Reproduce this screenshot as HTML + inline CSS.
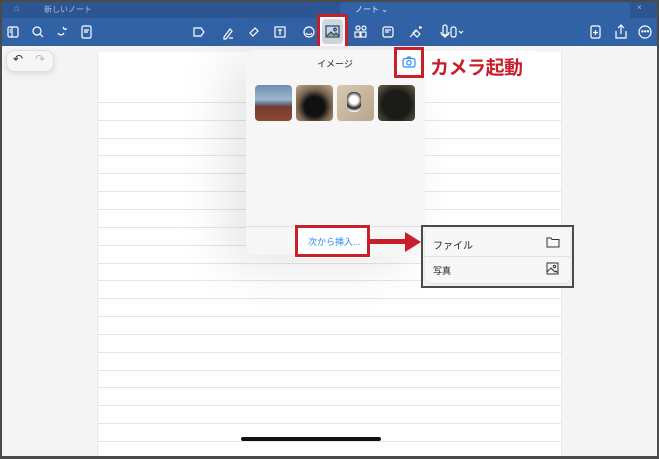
<!DOCTYPE html>
<html><head><meta charset="utf-8"><style>
*{margin:0;padding:0;box-sizing:border-box}
body{width:659px;height:459px;overflow:hidden;background:#f4f4f4;font-family:"Liberation Sans","Noto Sans CJK JP",sans-serif;position:relative}
.a{position:absolute}
.frame{left:0;top:0;width:659px;height:459px;border:2px solid #4a4a4a;border-bottom-width:3px;z-index:50;pointer-events:none}
.title{left:0;top:0;width:659px;height:18px;background:#2c5592}
.tool{left:0;top:18px;width:659px;height:28px;background:#3262a6}
.paper{left:97px;top:46px;width:465px;height:413px;background:#fff;border-left:1px solid #e8e8e8;border-right:1px solid #e8e8e8}
.line{position:absolute;left:0;width:100%;height:1px;background:#e6e6e6}
svg{position:absolute}
</style></head><body>
<div class="a title"></div>
<div class="a" style="left:14px;top:3px;color:#8fa6c8;font-size:9px">⌂</div>
<div class="a" style="left:44px;top:4px;color:#aebfd8;font-size:8px">新しいノート</div>
<div class="a" style="left:340px;top:2px;height:16px;background:#3262a6;border-radius:4px 4px 0 0;width:290px"></div>
<div class="a" style="left:355px;top:4px;color:#dfe7f2;font-size:8px">ノート ⌄</div>
<div class="a" style="left:637px;top:3px;color:#aebfd8;font-size:8px">×</div>
<div class="a tool"></div>
<svg width="659" height="46" style="left:0;top:0" fill="none" stroke="#fff" stroke-width="1.2">
<rect x="8" y="27" width="10" height="10" rx="1.5"/><path d="M12 27v10M9.5 30h1.5M9.5 32h1.5"/>
<circle cx="37" cy="31" r="4"/><path d="M40 34l3 3"/>
<path d="M58 33c1 2 4 3 6 0M63 27l1 2l2 0l-1 1"/>
<rect x="82" y="26" width="9" height="12" rx="1.5"/><path d="M84 30h5M84 32h4"/>
<path d="M194 28h7l3 4l-3 4h-7z"/>
<path d="M224 37l6-8l2 2l-6 8h-2zM229 38h4"/>
<path d="M250 33l5-5l3 3l-5 5z"/>
<rect x="275" y="27" width="10" height="10"/><path d="M278 30h4M280 30v5"/>
<circle cx="309" cy="32" r="5"/><path d="M306 33c1 2 5 2 6 0"/>
<circle cx="358" cy="28" r="2"/><circle cx="364" cy="28" r="2"/><rect x="355" y="32" width="5" height="5"/><rect x="361" y="32" width="5" height="5"/>
<rect x="383" y="27" width="10" height="10" rx="2"/><path d="M385 30h6M385 32h4"/>
<path d="M410 37l7-7M413 33l4 4l3-3l-4-4zM420 26v3M419 27.5h3"/>
<path d="M443 27v6a2 2 0 0 0 4 0v-6a2 2 0 0 0-4 0zM441 32a4 4 0 0 0 8 0M445 36v2"/>
<rect x="451" y="27" width="5" height="10" rx="2"/><path d="M459 31l2 2l2-2"/>
<rect x="591" y="26" width="9" height="12" rx="1.5"/><path d="M595.5 30v5M593 32.5h5"/>
<path d="M616 31v7h10v-7M621 34v-9M618 28l3-3l3 3"/>
<circle cx="645" cy="32" r="6"/>
</svg>
<div class="a" style="left:641px;top:27px;color:#fff;font-size:8px;font-weight:bold">•••</div>
<div class="a" style="left:317px;top:14px;width:31px;height:37px;border:3px solid #c8202a;background:#fff;border-radius:2px"></div>
<div class="a" style="left:322px;top:19px;width:21px;height:25px;background:#d3d8e0;border-radius:4px"></div>
<svg width="20" height="20" style="left:323px;top:22px" fill="none" stroke="#2c4f80" stroke-width="1.3"><rect x="3" y="4" width="13" height="11"/><path d="M4 14l4-4l3 3l2-2l3 3" fill="#a6b24a"/><circle cx="12" cy="7.5" r="1.3"/></svg>

<div class="a paper">
<div class="line" style="top:56px"></div><div class="line" style="top:74px"></div><div class="line" style="top:92px"></div><div class="line" style="top:109px"></div><div class="line" style="top:127px"></div><div class="line" style="top:145px"></div><div class="line" style="top:163px"></div><div class="line" style="top:181px"></div><div class="line" style="top:199px"></div><div class="line" style="top:217px"></div><div class="line" style="top:234px"></div><div class="line" style="top:252px"></div><div class="line" style="top:270px"></div><div class="line" style="top:288px"></div><div class="line" style="top:306px"></div><div class="line" style="top:324px"></div><div class="line" style="top:341px"></div><div class="line" style="top:359px"></div><div class="line" style="top:377px"></div><div class="line" style="top:395px"></div>
</div>
<div class="a" style="left:97px;top:46px;width:465px;height:6px;background:#f4f4f4"></div>

<div class="a" style="left:6px;top:50px;width:48px;height:22px;background:#f6f6f6;border:1px solid #dedede;border-radius:8px;box-shadow:0 2px 6px rgba(0,0,0,.1)"></div>
<div class="a" style="left:13px;top:52px;font-size:12px;color:#333">↶</div>
<div class="a" style="left:35px;top:52px;font-size:12px;color:#bbb">↷</div>

<div class="a" style="left:246px;top:50px;width:179px;height:205px;background:#f6f6f6;border-radius:8px;box-shadow:-20px 10px 50px rgba(0,0,0,.10)"></div>
<div class="a" style="left:317px;top:57px;font-size:9px;color:#222">イメージ</div>
<div class="a" style="left:255px;top:85px;width:37px;height:36px;border-radius:4px;background:linear-gradient(180deg,#6f8fb0 0%,#9db6cf 40%,#5b6470 55%,#7a3a2c 60%,#8b4a35 100%)"></div>
<div class="a" style="left:296px;top:85px;width:37px;height:36px;border-radius:4px;background:radial-gradient(circle at 50% 60%,#111 35%,#7a6650 60%,#c2ad8e 100%)"></div>
<div class="a" style="left:337px;top:85px;width:37px;height:36px;border-radius:4px;background:linear-gradient(135deg,#d7c8b0,#b8a68c)"></div>
<div class="a" style="left:347px;top:92px;width:14px;height:20px;border-radius:6px;background:radial-gradient(circle at 50% 40%,#fff 30%,#222 60%,#eee 80%)"></div>
<div class="a" style="left:378px;top:85px;width:37px;height:36px;border-radius:4px;background:radial-gradient(circle at 50% 55%,#1a1a16 50%,#5d5543 90%)"></div>
<div class="a" style="left:246px;top:226px;width:179px;height:1px;background:#e0e0e0"></div>

<div class="a" style="left:394px;top:47px;width:30px;height:31px;border:3px solid #c8202a;background:#fff"></div>
<svg width="14" height="12" style="left:402px;top:56px" fill="none" stroke="#2f8cf0" stroke-width="1.2"><rect x="1" y="2.5" width="12" height="8.5" rx="2"/><circle cx="7" cy="6.8" r="2.2"/><path d="M5 2.5l1-1.5h2l1 1.5"/></svg>
<div class="a" style="left:425px;top:51px;width:112px;height:28px;background:#fff"></div>
<div class="a" style="left:430px;top:53px;font-size:19px;font-weight:bold;color:#c8202a;letter-spacing:-0.5px">カメラ起動</div>

<div class="a" style="left:295px;top:225px;width:75px;height:32px;border:3px solid #c8202a;background:#fff;box-shadow:0 0 0 1px #fff"></div>
<div class="a" style="left:308px;top:235px;font-size:9px;color:#2f8cf0">次から挿入...</div>
<div class="a" style="left:370px;top:239px;width:40px;height:5px;background:#c8202a"></div>
<div class="a" style="left:405px;top:232px;width:0;height:0;border-top:10px solid transparent;border-bottom:10px solid transparent;border-left:16px solid #c8202a"></div>

<div class="a" style="left:421px;top:225px;width:153px;height:63px;border:2px solid #4a4a4a;background:#f4f4f4"></div>
<div class="a" style="left:425px;top:229px;width:145px;height:54px;background:#f7f7f7;border-radius:6px;box-shadow:0 1px 3px rgba(0,0,0,.1)"></div>
<div class="a" style="left:425px;top:256px;width:145px;height:1px;background:#e2e2e2"></div>
<div class="a" style="left:433px;top:237px;font-size:10px;color:#222">ファイル</div>
<div class="a" style="left:433px;top:264px;font-size:9px;color:#222">写真</div>
<svg width="14" height="12" style="left:546px;top:236px" fill="none" stroke="#333" stroke-width="1"><path d="M1 2h4l1 1.5h7v7.5h-12z"/></svg>
<svg width="14" height="14" style="left:546px;top:262px" fill="none" stroke="#333" stroke-width="1"><rect x="1" y="1" width="11" height="11"/><circle cx="8.5" cy="4.5" r="1.2"/><path d="M1 10l4-4l4 4l1-1l2 2"/></svg>
<div class="a" style="left:241px;top:437px;width:140px;height:4px;background:#111;border-radius:2px"></div>
<div class="a frame"></div>
</body></html>
